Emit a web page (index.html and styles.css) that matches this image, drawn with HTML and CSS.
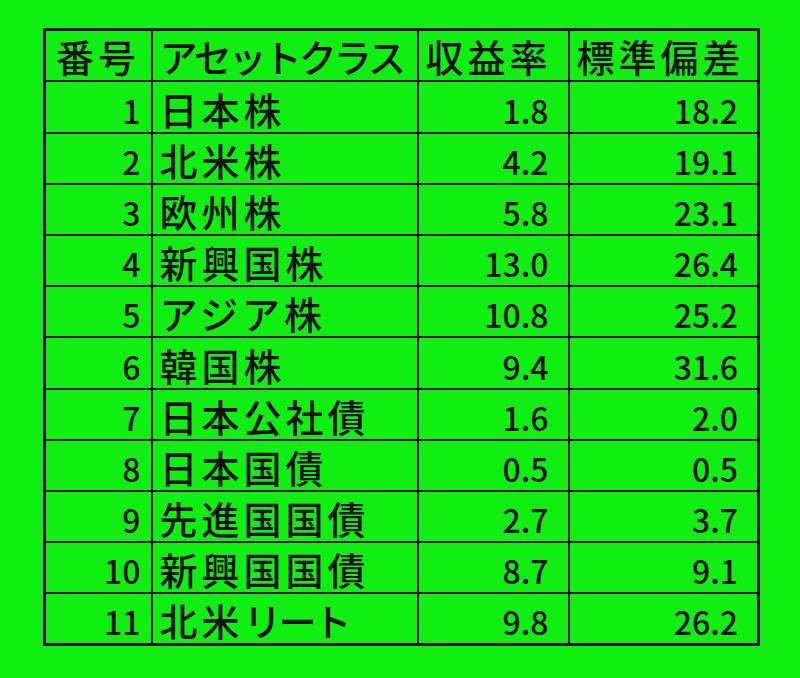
FILE: index.html
```html
<!DOCTYPE html>
<html lang="ja">
<head>
<meta charset="utf-8">
<title>アセットクラス</title>
<link rel="stylesheet" href="styles.css">
</head>
<body>
<table class="assets">
  <colgroup>
    <col class="c-no"><col class="c-name"><col class="c-ret"><col class="c-sd">
  </colgroup>
  <thead>
    <tr><th>番号</th><th class="kana">アセットクラス</th><th>収益率</th><th>標準偏差</th></tr>
  </thead>
  <tbody>
    <tr><td class="num">1</td><td class="name">日本株</td><td class="num">1.8</td><td class="num">18.2</td></tr>
    <tr><td class="num">2</td><td class="name">北米株</td><td class="num">4.2</td><td class="num">19.1</td></tr>
    <tr><td class="num">3</td><td class="name">欧州株</td><td class="num">5.8</td><td class="num">23.1</td></tr>
    <tr><td class="num">4</td><td class="name">新興国株</td><td class="num">13.0</td><td class="num">26.4</td></tr>
    <tr><td class="num">5</td><td class="name">アジア株</td><td class="num">10.8</td><td class="num">25.2</td></tr>
    <tr><td class="num">6</td><td class="name">韓国株</td><td class="num">9.4</td><td class="num">31.6</td></tr>
    <tr><td class="num">7</td><td class="name">日本公社債</td><td class="num">1.6</td><td class="num">2.0</td></tr>
    <tr><td class="num">8</td><td class="name">日本国債</td><td class="num">0.5</td><td class="num">0.5</td></tr>
    <tr><td class="num">9</td><td class="name">先進国国債</td><td class="num">2.7</td><td class="num">3.7</td></tr>
    <tr><td class="num">10</td><td class="name">新興国国債</td><td class="num">8.7</td><td class="num">9.1</td></tr>
    <tr><td class="num">11</td><td class="name">北米<span class="tight">リート</span></td><td class="num">9.8</td><td class="num">26.2</td></tr>
  </tbody>
</table>
</body>
</html>
```
FILE: styles.css
```css
html, body {
  margin: 0;
  padding: 0;
  background: #11ee11;
}
body {
  padding: 28px 0 0 43px;
  font-family: "Noto Sans CJK JP", "Noto Sans", sans-serif;
  color: #111;
}
.assets {
  border-collapse: collapse;
  border: 3px solid #111;
  width: 714px;
  table-layout: fixed;
}
.c-no { width: 107px; }
.c-name { width: 266px; }
.c-ret { width: 151px; }
.c-sd { width: 190px; }
.assets th, .assets td {
  border: 2px solid #111;
  padding: 0;
  white-space: nowrap;
  line-height: 1;
  font-weight: 500;
}
.assets th {
  height: 49.4px;
  font-size: 38px;
  letter-spacing: 4px;
  text-align: left;
  padding-left: 7px;
  vertical-align: middle;
}
.assets th:first-child {
  padding-left: 10px;
}
.assets th.kana {
  letter-spacing: -3px;
}
.assets td {
  height: 43.2px;
  vertical-align: bottom;
  padding-bottom: 6px;
}
.assets td.num {
  font-size: 32px;
  text-align: right;
  padding-right: 19px;
}
.assets td.num:first-child {
  padding-right: 10px;
}
.assets td.name {
  height: 45.2px;
  font-size: 38px;
  letter-spacing: 4px;
  padding-left: 7px;
  padding-bottom: 4px;
}
.tight {
  letter-spacing: -3px;
}
```
